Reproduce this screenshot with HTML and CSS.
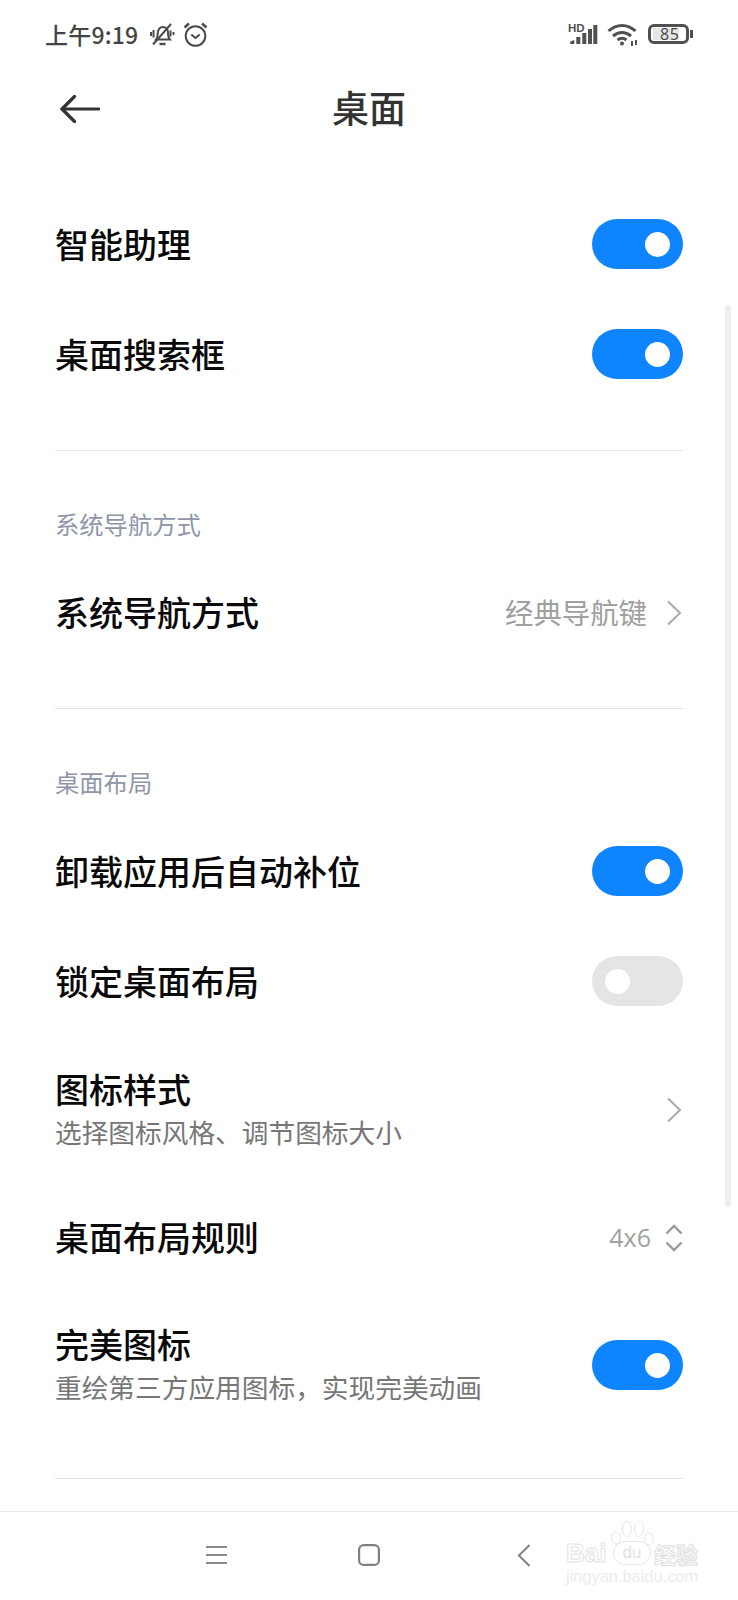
FILE: index.html

```html
<!DOCTYPE html>
<html lang="zh-CN">
<head>
  <meta charset="UTF-8" />
  <meta name="viewport" content="width=device-width, initial-scale=1.0" />
  <title>桌面</title>
  <link rel="stylesheet" href="styles.css">
</head>
<body>

<div class="phone">
  <div class="status">
    <span class="time">上午9:19</span>
    <svg class="st-bell" width="26" height="24" viewBox="0 0 26 24" fill="none" stroke="#4a4a4a" stroke-width="2">
      <path d="M7 17.500c1.200-1.500 1.700-3 1.700-5.500 0-3.500 1.800-6.500 4.800-7 3.200-.3 5.500 2.200 5.500 5.500 0 3 .5 5.500 1.800 7z" />
      <path d="M10.500 22h6" stroke-width="2.400" />
      <path d="M4 22.500 22 2" />
      <path d="M2 10v4M4.500 8v7.500M21.500 8.500v6M24.500 10v3" stroke-width="2" />
    </svg>
    <svg class="st-alarm" width="25" height="25" viewBox="0 0 25 25" fill="none" stroke="#4a4a4a" stroke-width="2">
      <circle cx="12.500" cy="14" r="9.800" />
      <path d="M8.300 12.500 12.500 16l4.200-3.500" />
      <path d="M1.500 5.500 6 1.500M23.500 5.500l-4.500-4" stroke-width="2.400" />
    </svg>
    <span class="st-spacer"></span>
    <svg class="st-signal" width="30" height="23" viewBox="0 0 30 23" fill="#505050">
      <text x="0" y="9" class="hd-text">HD</text>
      <path d="M2.300 21v-2.500l4-1.500v4zM8.300 21v-7h4v7zM14.300 21V10h4v11zM20 21V6h4v15zM25.300 21V2h4v19z" />
    </svg>
    <svg class="st-wifi" width="31" height="23" viewBox="0 0 31 23" fill="none" stroke="#505050" stroke-width="3">
      <path d="M1.500 8c8-7.500 19-7.500 27 0" />
      <path d="M6 13c5.500-4.700 12.500-4.700 18 0" />
      <path d="M10.500 17c3-2.300 6-2.300 9 0" />
      <circle cx="15" cy="20.500" r="2" fill="#505050" stroke="none" />
      <path d="M25 18v5M29 17v5" stroke-width="2" />
    </svg>
    <div class="battery">
      <div class="batt-body"><span class="batt-fill" style="width: 85%">85</span></div>
      <span class="batt-cap"></span>
    </div>
  </div>

  <div class="titlebar">
    <svg class="back" width="40" height="28" viewBox="0 0 40 28" fill="none" stroke="#333" stroke-width="3.2" stroke-linecap="round" stroke-linejoin="round">
      <path d="M38.500 14H2" />
      <path d="M14.500 1.500 2 14l12.500 12.500" />
    </svg>
    <h1>桌面</h1>
  </div>

  <div class="section first">
    <div class="row sw">
      <span class="name">智能助理</span>
      <span class="toggle on"></span>
    </div>
    <div class="row sw">
      <span class="name">桌面搜索框</span>
      <span class="toggle on"></span>
    </div>
  </div>

  <div class="section">
    <div class="label">系统导航方式</div>
    <div class="row">
      <span class="name">系统导航方式</span>
      <span class="value">经典导航键</span>
      <svg class="chev" width="16" height="26" viewBox="0 0 16 26" fill="none" stroke="#aaa" stroke-width="2"><path d="M2 1.500 14 13 2 24.500" /></svg>
    </div>
  </div>

  <div class="section">
    <div class="label">桌面布局</div>
    <div class="row sw">
      <span class="name">卸载应用后自动补位</span>
      <span class="toggle on"></span>
    </div>
    <div class="row sw">
      <span class="name">锁定桌面布局</span>
      <span class="toggle"></span>
    </div>
    <div class="row tall">
      <div class="two-line">
        <span class="name">图标样式</span>
        <span class="sub">选择图标风格、调节图标大小</span>
      </div>
      <svg class="chev" width="16" height="26" viewBox="0 0 16 26" fill="none" stroke="#aaa" stroke-width="2"><path d="M2 1.500 14 13 2 24.500" /></svg>
    </div>
    <div class="row short">
      <span class="name">桌面布局规则</span>
      <span class="value small">4x6</span>
      <svg class="updown" width="18" height="28" viewBox="0 0 18 28" fill="none" stroke="#999" stroke-width="2.400"><path d="M1.500 9.500 9 2l7.500 7.500M1.500 18.500 9 26l7.500-7.500" /></svg>
    </div>
    <div class="row tall last">
      <div class="two-line">
        <span class="name">完美图标</span>
        <span class="sub">重绘第三方应用图标，实现完美动画</span>
      </div>
      <span class="toggle on"></span>
    </div>
  </div>

  <div class="scrollbar"></div>

  <div class="navbar">
    <svg class="nav-menu" width="21" height="18" viewBox="0 0 21 18" fill="none" stroke="#8a8a8a" stroke-width="2"><path d="M0 1h21M0 9h21M0 17h21" /></svg>
    <svg class="nav-home" width="22" height="22" viewBox="0 0 22 22" fill="none" stroke="#808080" stroke-width="2.200"><rect x="1.100" y="1.100" width="19.800" height="19.800" rx="4.500" /></svg>
    <svg class="nav-back" width="14" height="23" viewBox="0 0 14 23" fill="none" stroke="#808080" stroke-width="2"><path d="M12.500 1 2 11.500 12.500 22" /></svg>
  </div>

  <div class="watermark">
    <svg class="wm-paw" width="52" height="32" viewBox="0 0 52 32" fill="#fff" stroke="#e6e6e6" stroke-width="1">
      <ellipse cx="9" cy="19" rx="4.500" ry="6" />
      <ellipse cx="20" cy="10" rx="4.500" ry="7.500" />
      <ellipse cx="32" cy="10" rx="4.500" ry="7.500" />
      <ellipse cx="42" cy="20" rx="4.500" ry="6" />
    </svg>
    <div class="wm-top">
      <span class="wm-bai">Bai</span>
      <span class="wm-du">du</span>
      <span class="wm-jy">经验</span>
    </div>
    <div class="wm-url">jingyan.baidu.com</div>
  </div>
</div>

</body>
</html>
```

FILE: styles.css

```css
* {
  box-sizing: border-box;
}
body {
  margin: 0;
  background: #fff;
  font-family: "Noto Sans CJK SC", "Noto Sans", sans-serif;
  color: #000;
}
.phone {
  position: relative;
  width: 738px;
  height: 1600px;
  overflow: hidden;
  display: flex;
  flex-direction: column;
  background: #fff;
}

/* status bar */
.status {
  height: 68px;
  display: flex;
  align-items: center;
  padding: 0 45px;
}
.time {
  font-size: 23px;
  font-weight: 500;
  color: #444;
  width: 104px;
  white-space: nowrap;
  letter-spacing: 0.2px;
}
.st-alarm {
  margin-left: 8px;
}
.st-spacer {
  flex: 1;
}
.hd-text {
  font-family: "Liberation Sans", sans-serif;
  font-size: 11.5px;
  font-weight: 700;
}
.st-wifi {
  margin-left: 9px;
}
.battery {
  margin-left: 10px;
  display: flex;
  align-items: center;
  gap: 1px;
}
.batt-body {
  width: 41px;
  height: 20px;
  border: 3px solid #505050;
  border-radius: 6px;
  padding: 1px 2px;
}
.batt-fill {
  display: block;
  height: 12px;
  background: #e6e6e6;
  font-family: "Open Sans", sans-serif;
  font-size: 16px;
  line-height: 12px;
  color: #444;
  text-align: right;
  letter-spacing: 0.5px;
}
.batt-cap {
  width: 3px;
  height: 8px;
  background: #505050;
}

/* title */
.titlebar {
  height: 80px;
  display: grid;
  grid-template-columns: 1fr auto 1fr;
  align-items: center;
  padding: 0 60px;
}
.titlebar h1 {
  margin: 0 0 2px;
  font-size: 37px;
  font-weight: 500;
  line-height: 50px;
  color: #333;
}
.back {
  grid-column: 1;
  margin-top: 2px;
}

/* sections */
.section {
  margin: 0 55px;
  padding-bottom: 40px;
  border-bottom: 1px solid #e4e4e4;
}
.section.first {
  margin-top: 41px;
  padding-bottom: 41px;
}
.label {
  padding-top: 58px;
  height: 107px;
  font-size: 24.3px;
  line-height: 30px;
  color: #8f96aa;
}
.row {
  height: 110px;
  display: flex;
  align-items: center;
}
.row.tall {
  height: 148px;
}
.row.short {
  height: 108px;
}
.row.last {
  height: 146px;
}
.name {
  flex: 1;
  padding-bottom: 3px;
  font-size: 34px;
  font-weight: 500;
  line-height: 44px;
  color: #0a0a0a;
  white-space: nowrap;
}
.row.sw .name {
  padding-bottom: 0;
}
.two-line {
  flex: 1;
  display: flex;
  flex-direction: column;
  margin-bottom: 3px;
}
.row.last .two-line {
  margin-bottom: 2px;
}
.two-line .name {
  flex: none;
  padding-bottom: 2px;
}
.sub {
  font-size: 26.7px;
  line-height: 38px;
  color: #777;
  white-space: nowrap;
}
.value {
  padding-bottom: 3px;
  font-size: 28.4px;
  color: #a0a0a0;
  margin-right: 19px;
}
.value.small {
  font-family: "Open Sans", sans-serif;
  font-size: 25px;
  margin-right: 14px;
}
.chev {
  flex: none;
  margin-right: 1px;
}
.updown {
  flex: none;
}

/* switches */
.toggle {
  position: relative;
  flex: none;
  width: 91px;
  height: 50px;
  border-radius: 25px;
  background: #e5e5e5;
}
.toggle::after {
  content: "";
  position: absolute;
  top: 13px;
  left: 13px;
  width: 25px;
  height: 25px;
  border-radius: 50%;
  background: #fff;
}
.toggle.on {
  background: #0f84ff;
}
.toggle.on::after {
  left: 53px;
}

.scrollbar {
  position: absolute;
  left: 725px;
  top: 305px;
  width: 6px;
  height: 902px;
  border-radius: 3px;
  background: #eee;
}

/* bottom nav */
.navbar {
  position: absolute;
  left: 0;
  right: 0;
  bottom: 0;
  height: 89px;
  border-top: 1px solid #e8e8e8;
  background: #fff;
  display: flex;
  align-items: center;
  padding: 0 0 2px 206px;
}
.nav-home {
  margin-left: 131px;
}
.nav-back {
  margin-left: 137px;
}

/* watermark */
.watermark {
  position: absolute;
  left: 566px;
  top: 1518px;
  width: 132px;
  height: 70px;
}
.wm-paw {
  position: absolute;
  left: 41px;
  top: 1px;
}
.wm-top {
  position: absolute;
  top: 20px;
  left: 0;
  display: flex;
  align-items: center;
  white-space: nowrap;
}
.wm-bai {
  width: 44px;
  font-family: "Liberation Sans", sans-serif;
  font-size: 26px;
  font-weight: 700;
  line-height: 30px;
  color: #fff;
  -webkit-text-stroke: 1px #e4e4e4;
}
.wm-du {
  position: relative;
  width: 38px;
  height: 24px;
  border: 1px solid #e6e6e6;
  border-radius: 12px;
  background: #fff;
  font-family: "Liberation Sans", sans-serif;
  font-size: 17px;
  line-height: 21px;
  text-align: center;
  color: #e2e2e2;
  margin-left: 3px;
}
.wm-jy {
  font-size: 22px;
  line-height: 30px;
  margin-left: 3px;
  font-weight: 700;
  color: #fff;
  -webkit-text-stroke: 1px #e0e0e0;
}
.wm-url {
  position: absolute;
  top: 49px;
  left: 0;
  font-family: "Liberation Sans", sans-serif;
  font-size: 16.4px;
  line-height: 18px;
  color: #ececec;
  white-space: nowrap;
}
```
